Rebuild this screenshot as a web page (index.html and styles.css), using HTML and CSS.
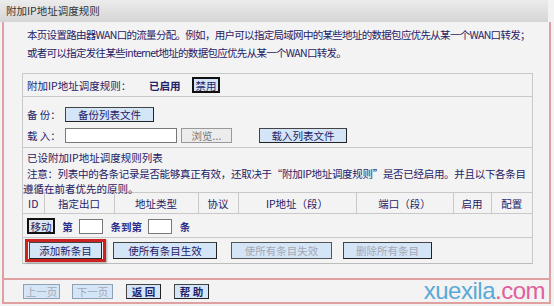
FILE: index.html
```
<!DOCTYPE html>
<html lang="zh-CN">
<head>
  <meta charset="UTF-8" />
  <title>附加IP地址调度规则</title>
  <link rel="stylesheet" href="styles.css">
</head>
<body>

  <div class="page">
    <div class="title">附加IP地址调度规则</div>

    <div class="frame">
      <div class="content">
        <p class="intro">
          本页设置路由器WAN口的流量分配。例如，用户可以指定局域网中的某些地址的数据包应优先从某一个WAN口转发；<br>
          或者可以指定发往某些internet地址的数据包应优先从某一个WAN口转发。
        </p>

        <div class="box">
          <!-- Status row -->
          <div class="row status-row">
            <span class="label">附加IP地址调度规则：</span>
            <span class="state">已启用</span>
            <button class="btn btn-toggle">禁用</button>
          </div>

          <!-- Backup / load -->
          <div class="row file-row">
            <div class="line">
              <span class="label short">备&nbsp;份：</span>
              <button class="btn btn-backup">备份列表文件</button>
            </div>
            <div class="line">
              <span class="label short">载&nbsp;入：</span>
              <input type="text" class="file-input">
              <button class="btn btn-browse">浏览...</button>
              <button class="btn btn-load">载入列表文件</button>
            </div>
          </div>

          <!-- Notice -->
          <div class="notice">
            <div class="notice-title">已设附加IP地址调度规则列表</div>
            <p class="notice-text">
              <span class="first">注意：列表中的各条记录是否能够真正有效，还取决于“附加IP地址调度规则”是否已经启用。并且以下各条目</span><br>
              遵循在前者优先的原则。
            </p>
          </div>

          <table class="rules">
            <tr class="head">
              <td class="c-id">ID</td>
              <td class="c-out">指定出口</td>
              <td class="c-type">地址类型</td>
              <td class="c-proto">协议</td>
              <td class="c-ip">IP地址（段）</td>
              <td class="c-port">端口（段）</td>
              <td class="c-on">启用</td>
              <td class="c-cfg">配置</td>
            </tr>
            <tr class="move-row">
              <td colspan="8">
                <button class="btn btn-move">移动</button>
                <span class="move-text">第</span>
                <input type="text" class="num-input">
                <span class="move-text">条到第</span>
                <input type="text" class="num-input">
                <span class="move-text">条</span>
              </td>
            </tr>
          </table>

          <div class="actions">
            <span class="highlight"><button class="btn btn-add">添加新条目</button></span>
            <button class="btn btn-all-on">使所有条目生效</button>
            <button class="btn btn-all-off" disabled>使所有条目失效</button>
            <button class="btn btn-del" disabled>删除所有条目</button>
          </div>
        </div>
      </div>

      <div class="footer">
        <button class="btn btn-page" disabled>上一页</button>
        <button class="btn btn-page btn-next" disabled>下一页</button>
        <button class="btn btn-nav">返 回</button>
        <button class="btn btn-nav">帮 助</button>
      </div>
    </div>

    <div class="watermark"><span class="wm-blue">xuexila</span><span class="wm-pink">.com</span></div>
  </div>

</body>
</html>
```

FILE: styles.css
```
* {
  box-sizing: border-box;
}

body {
  margin: 0;
  background-color: #f3f3f3;
  font-family: "Noto Sans CJK SC", "DejaVu Sans", sans-serif;
  font-size: 10.5px;
  color: #1f2266;
}

.page {
  position: relative;
  width: 554px;
  height: 306px;
}

.title {
  height: 22px;
  width: 548px;
  line-height: 22px;
  padding-left: 6px;
  color: #333;
  font-size: 10.5px;
  background: linear-gradient(#ececec, #d5d5d5);
}

.frame {
  margin-left: 2px;
  width: 549px;
  height: 282px;
  border-left: 2px solid #e0a0a0;
  border-right: 2px solid #e0a0a0;
  border-bottom: 2px solid #e0a0a0;
}

.content {
  height: 258px;
  border-bottom: 2px solid #e0a0a0;
}

.intro {
  margin: 0;
  padding: 4px 0 0 23px;
  line-height: 18px;
  white-space: nowrap;
  letter-spacing: -0.7px;
}

.box {
  margin: 11px 0 0 18px;
  width: 511px;
  border: 1px solid #c9c9c9;
  border-bottom-color: #bbb;
}

.row {
  border-bottom: 1px solid #c9c9c9;
  padding-left: 4px;
}

.status-row {
  height: 23px;
  display: flex;
  align-items: center;
}

.status-row .label {
  width: 122px;
}

.state {
  font-weight: bold;
  width: 43px;
}

.file-row {
  height: 51px;
  padding-top: 7px;
}

.line {
  display: flex;
  align-items: center;
  height: 21px;
}

.label.short {
  width: 38px;
}

.btn {
  font-family: inherit;
  font-size: 10.5px;
  height: 15px;
  line-height: 13px;
  padding: 0;
  color: #1f2266;
  background-color: #d5e5f8;
  border: 1px solid #444;
  border-right-color: #222;
  border-bottom-color: #222;
  cursor: pointer;
}

.btn:disabled {
  color: #a4a8b4;
}

.btn-toggle {
  width: 28px;
  height: 16px;
  border: 2px solid #111;
}

.btn-backup {
  width: 89px;
}

.file-input {
  width: 112px;
  height: 15px;
  border: 1px solid #777;
  background: #fff;
  margin: 0;
}

.btn-browse {
  width: 51px;
  margin-left: 4px;
  color: #777;
  background-color: #ececec;
  border-color: #999;
}

.btn-load {
  width: 88px;
  margin-left: 27px;
}

.notice {
  padding-top: 2px;
  height: 44px;
}

.notice-title {
  padding-left: 4px;
  line-height: 16px;
}

.notice-text {
  margin: 0;
  line-height: 15px;
  white-space: nowrap;
}

.notice-text .first {
  padding-left: 4px;
  letter-spacing: -0.3px;
}

.rules {
  width: 100%;
  border-collapse: collapse;
}

.rules td {
  padding: 0;
}

.head td {
  height: 21px;
  text-align: center;
  border: 1px solid #c9c9c9;
  border-bottom-color: #c9c9c9;
}

.head td:first-child {
  border-left: none;
}

.head td:last-child {
  border-right: none;
}

.c-id { width: 21px; }
.c-out { width: 70px; }
.c-type { width: 84px; }
.c-proto { width: 40px; }
.c-ip { width: 118px; }
.c-port { width: 97px; }
.c-on { width: 38px; }

.move-row td {
  height: 24px;
  padding-left: 4px;
  border-bottom: 1px solid #c9c9c9;
}

.btn-move {
  width: 28px;
  height: 16px;
  border: 2px solid #111;
  background-color: #dde6ee;
  vertical-align: middle;
}

.move-text {
  font-weight: bold;
  color: #2a2e8a;
  margin: 0 4px 0 5px;
  vertical-align: middle;
}

.num-input {
  width: 24px;
  height: 15px;
  border: 1px solid #777;
  background: #fff;
  vertical-align: middle;
  margin: 0;
}

.actions {
  height: 25px;
  display: flex;
  align-items: center;
  padding-left: 2px;
}

.highlight {
  display: inline-flex;
  border: 3px solid #cc2222;
  padding: 0 1px;
  height: 23px;
  align-items: center;
  box-shadow: 1px 1px 2px rgba(0, 0, 0, 0.3);
}

.btn-add {
  width: 73px;
  height: 17px;
}

.btn-all-on {
  width: 104px;
  height: 17px;
  margin-left: 7px;
}

.btn-all-off {
  width: 101px;
  height: 17px;
  margin-left: 14px;
  border-color: #555;
}

.btn-del {
  width: 89px;
  height: 17px;
  margin-left: 11px;
}

.footer {
  height: 22px;
  display: flex;
  align-items: center;
  padding-left: 19px;
}

.btn-page {
  width: 37px;
  border-color: #8da0b4;
}

.btn-next {
  width: 41px;
  margin-left: 12px;
}

.btn-nav {
  width: 35px;
  margin-left: 13px;
  font-weight: bold;
}

.watermark {
  position: absolute;
  right: 9px;
  bottom: 3px;
  font-family: "Liberation Sans", Arial, sans-serif;
  font-size: 24px;
  line-height: 24px;
  letter-spacing: -0.5px;
}

.wm-blue {
  color: #5aa9d6;
}

.wm-pink {
  color: #e0609c;
}
```
